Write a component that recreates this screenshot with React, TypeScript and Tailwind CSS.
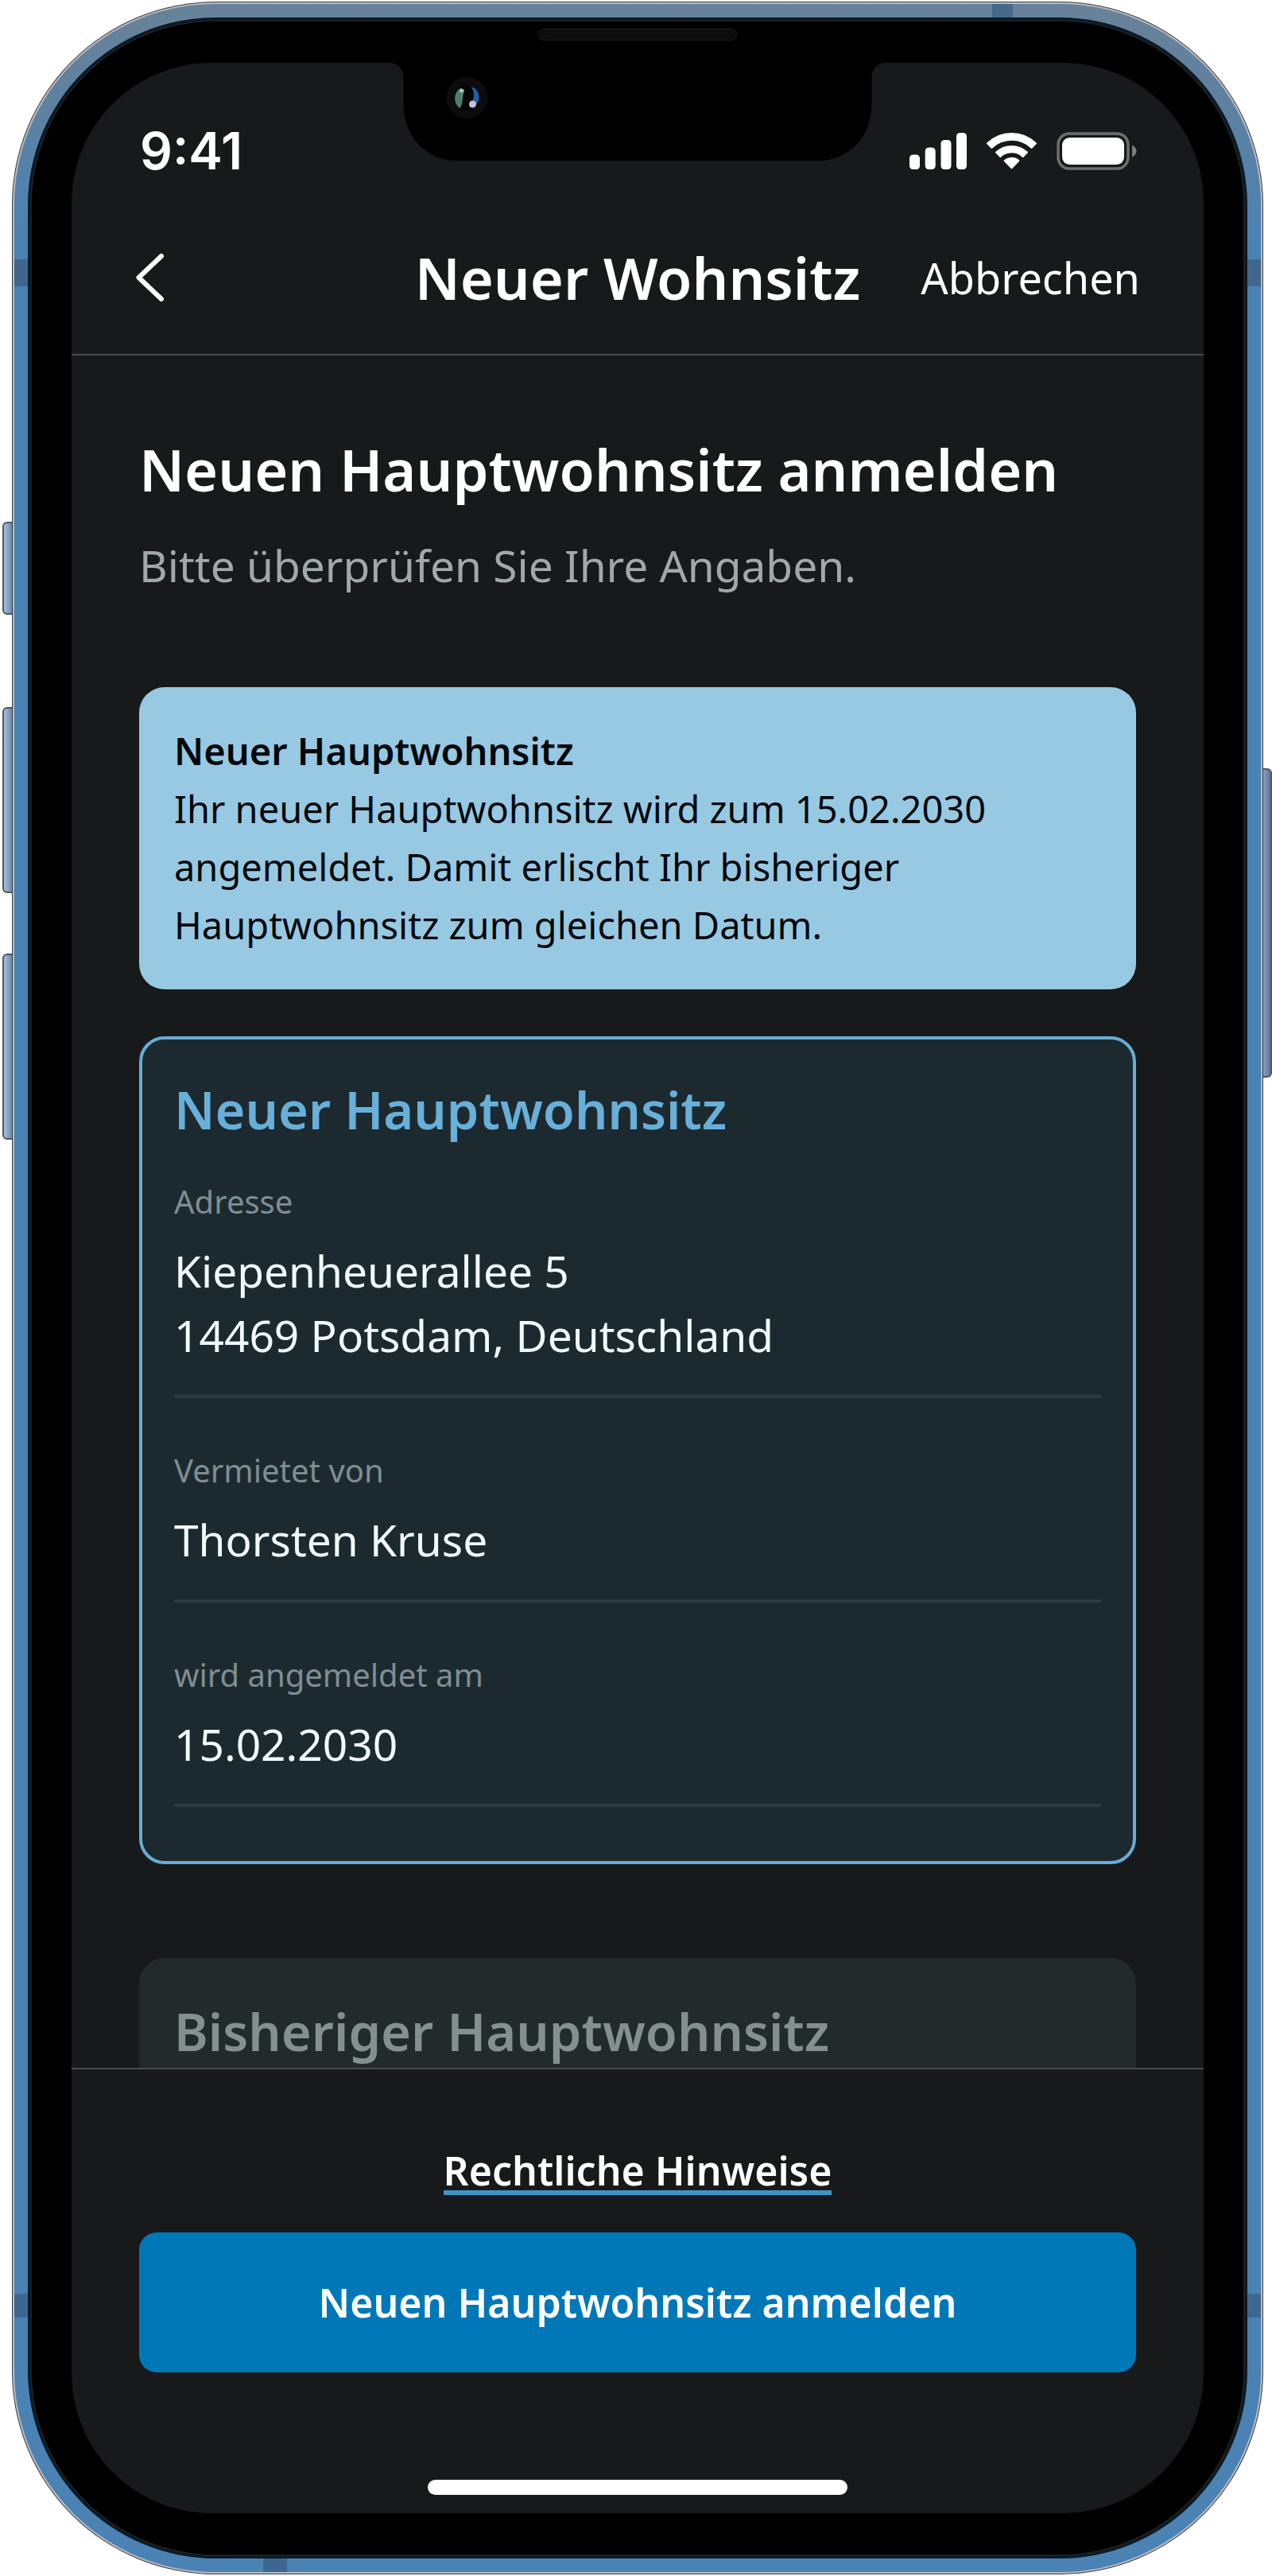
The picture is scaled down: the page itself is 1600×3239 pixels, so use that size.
type Entry = { label: string; lines: string[] };

const ENTRIES: Entry[] = [
  { label: "Adresse", lines: ["Kiepenheuerallee 5", "14469 Potsdam, Deutschland"] },
  { label: "Vermietet von", lines: ["Thorsten Kruse"] },
  { label: "wird angemeldet am", lines: ["15.02.2030"] },
];

function SignalIcon() {
  return (
    <svg viewBox="0 0 72 46" className="h-[46px] w-[72px]" fill="white" aria-hidden="true">
      <rect x="0" y="27.500" width="13" height="18.500" rx="4.500" />
      <rect x="19.700" y="18.500" width="13" height="27.500" rx="4.500" />
      <rect x="39.500" y="9" width="13" height="37" rx="4.500" />
      <rect x="59" y="0" width="13" height="46" rx="4.500" />
    </svg>
  );
}

function WifiIcon() {
  return (
    <svg
      viewBox="0 0 63 46"
      className="h-[46px] w-[63px]"
      fill="white"
      stroke="white"
      strokeWidth="2"
      strokeLinejoin="round"
      aria-hidden="true"
    >
      <path d="M1 13.300A44 44 0 0 1 62 13.300L56.600 18.700A36.500 36.500 0 0 0 6.400 18.700Z" />
      <path d="M12 24.600A29 29 0 0 1 51 24.600L45.700 30A20.500 20.500 0 0 0 17.300 30Z" />
      <path d="M22.600 35A14 14 0 0 1 40.400 35L31.500 44.300Z" />
    </svg>
  );
}

function BatteryIcon() {
  return (
    <svg viewBox="0 0 101 48" className="h-[48px] w-[101px]" fill="none" aria-hidden="true">
      <rect x="2" y="2" width="88" height="44" rx="14" stroke="#6d6e6f" strokeWidth="3.500" />
      <rect x="7" y="7" width="78" height="34" rx="9.500" fill="white" />
      <path d="M95 16.500C98.500 18 100.500 21 100.500 24S98.500 30 95 31.500Z" fill="#7c7d7e" />
    </svg>
  );
}

function Notch() {
  return (
    <svg
      viewBox="0 0 625 123"
      className="absolute top-0 left-1/2 h-[123px] w-[625px] -translate-x-1/2"
      aria-hidden="true"
    >
      <path d="M0 0C12 0 18 8 18 20V52C18 93 47 123 85 123H540C578 123 607 93 607 52V20C607 8 613 0 625 0Z" />
      <g transform="translate(98 44)">
        <circle r="26" fill="#0c0c0d" />
        <circle r="16" fill="#020303" />
        <path d="M-8-12C-17-8-18 7-9 13C-5 9-6-4-3-10Z" fill="#4f7f6c" />
        <path d="M5-14C15-12 18 2 12 8L6 5C10-1 9-8 5-14Z" fill="#1f5fa8" />
        <circle cx="-7" cy="-9" r="2.500" fill="#a9c9bd" />
        <circle cx="7" cy="8" r="4.500" fill="#c3c2dc" />
      </g>
    </svg>
  );
}

function SideButtons() {
  return (
    <div aria-hidden="true">
      <div className="absolute top-[656px] left-[3px] h-[117px] w-[14px] rounded-l-md border-2 border-[#4f5666] bg-linear-to-r from-[#b3bdd0] to-[#5f8cba]" />
      <div className="absolute top-[889px] left-[3px] h-[234px] w-[14px] rounded-l-md border-2 border-[#4f5666] bg-linear-to-r from-[#b3bdd0] to-[#5f8cba]" />
      <div className="absolute top-[1199px] left-[3px] h-[234px] w-[14px] rounded-l-md border-2 border-[#4f5666] bg-linear-to-r from-[#b3bdd0] to-[#5f8cba]" />
      <div className="absolute top-[966px] right-0 h-[389px] w-[13px] rounded-r-md border-2 border-[#4f5666] bg-linear-to-l from-[#5d7299] to-[#86a4c8]" />
    </div>
  );
}

function AntennaBands() {
  return (
    <div aria-hidden="true">
      <div className="absolute top-[321px] left-0 h-[34px] w-full bg-[#40678b]" />
      <div className="absolute bottom-[320px] left-0 h-[30px] w-full bg-[#3d6790]" />
      <div className="absolute top-0 right-[312px] h-[20px] w-[26px] bg-[#45698a]" />
      <div className="absolute bottom-0 left-[313px] h-[20px] w-[30px] bg-[#3d6790]" />
    </div>
  );
}

function StatusBar() {
  return (
    <div className="flex h-[72px] items-center justify-between pr-[84px] pl-[86px]">
      <time className="font-['Inter',sans-serif] text-[64px] leading-[72px] font-semibold">9:41</time>
      <div className="flex items-center gap-[25px]">
        <SignalIcon />
        <WifiIcon />
        <BatteryIcon />
      </div>
    </div>
  );
}

function NavBar() {
  return (
    <nav className="mt-[27px] grid h-[192px] grid-cols-[1fr_auto_1fr] items-center px-[80px]">
      <button type="button" aria-label="Zurück" className="justify-self-start">
        <svg
          viewBox="0 0 38 62"
          className="h-[62px] w-[38px]"
          fill="none"
          stroke="white"
          strokeWidth="6"
          strokeLinecap="round"
          strokeLinejoin="round"
          aria-hidden="true"
        >
          <path d="M33 4L4.500 31L33 58" />
        </svg>
      </button>
      <p className="text-[72px] leading-[96px] font-semibold">Neuer Wohnsitz</p>
      <button type="button" className="justify-self-end text-[54px] leading-[80px]">
        Abbrechen
      </button>
    </nav>
  );
}

function InfoBox() {
  return (
    <section className="mt-[113px] rounded-[32px] bg-[#98c9e2] p-[44px] text-[47px] leading-[73px] text-[#02080c]">
      <h2 className="font-semibold">Neuer Hauptwohnsitz</h2>
      <p>
        Ihr neuer Hauptwohnsitz wird zum 15.02.2030
        <br />
        angemeldet. Damit erlischt Ihr bisheriger
        <br />
        Hauptwohnsitz zum gleichen Datum.
      </p>
    </section>
  );
}

function ResidenceCard() {
  return (
    <section className="mt-[59px] rounded-[32px] border-4 border-[#67add6] bg-[#1c2a30] px-[40px] pt-[44px] pb-[68px]">
      <h2 className="text-[65px] leading-[88px] font-semibold text-[#68afd9]">Neuer Hauptwohnsitz</h2>
      <dl className="mt-[45px] flex flex-col gap-[64px]">
        {ENTRIES.map((entry) => (
          <div key={entry.label} className="border-b-4 border-[#2f3a40] pb-[35px]">
            <dt className="text-[40px] leading-[54px] text-[#7f8e92]">{entry.label}</dt>
            <dd className="mt-[19px] text-[55px] leading-[81px] text-[#f1f9fc]">
              {entry.lines.map((line) => (
                <span key={line} className="block">
                  {line}
                </span>
              ))}
            </dd>
          </div>
        ))}
      </dl>
    </section>
  );
}

function Footer() {
  return (
    <footer className="flex shrink-0 flex-col items-center border-t-2 border-[#484b4c] px-[85px] pb-[23px]">
      <a
        href="#hinweise"
        className="mt-[102px] border-b-[6px] border-[#3e96c6] text-[50px] leading-[50px] font-semibold"
      >
        Rechtliche Hinweise
      </a>
      <button
        type="button"
        className="mt-[47px] h-[176px] w-full rounded-[22px] bg-[#0078b8] text-[50px] leading-[72px] font-semibold"
      >
        Neuen Hauptwohnsitz anmelden
      </button>
      <div className="mt-[135px] h-[19px] w-[528px] rounded-full bg-white" aria-hidden="true" />
    </footer>
  );
}

function Screen() {
  return (
    <div className="relative flex h-full flex-col overflow-hidden rounded-[176px] bg-[#17191a] text-white">
      <header className="shrink-0 border-b-2 border-[#484b4c] pt-[75px]">
        <StatusBar />
        <NavBar />
      </header>
      <main className="min-h-0 flex-1 overflow-y-auto px-[85px] pt-[95px] [scrollbar-width:none]">
        <h1 className="text-[72px] leading-[96px] font-semibold">Neuen Hauptwohnsitz anmelden</h1>
        <p className="mt-[33px] text-[55px] leading-[80px] text-[#a1a9a8]">Bitte überprüfen Sie Ihre Angaben.</p>
        <InfoBox />
        <ResidenceCard />
        <section className="mt-[118px] rounded-[32px] bg-[#232a2a] px-[44px] pt-[48px] pb-[68px]">
          <h2 className="text-[65px] leading-[88px] font-semibold text-[#84908f]">Bisheriger Hauptwohnsitz</h2>
        </section>
      </main>
      <Footer />
      <Notch />
    </div>
  );
}

export default function App() {
  return (
    <div className="relative h-screen min-h-[1800px] overflow-hidden bg-white pt-[2px] pr-[11px] pb-[2px] pl-[15px] font-['Noto_Sans',sans-serif]">
      <SideButtons />
      <div className="relative h-full rounded-[256px] bg-[#3c3c40] p-px">
        <div className="h-full rounded-[255px] bg-[#b9bcc2] p-[2px]">
          <div className="relative h-full overflow-hidden rounded-[253px] bg-linear-[180deg,#68829a_0px,#5f819f_120px,#4a82b4_300px] p-[17px]">
            <AntennaBands />
            <div className="relative h-full rounded-[236px] bg-[#0b1a26] p-[3px]">
              <div className="relative h-full rounded-[233px] border-2 border-[#1d1f20] bg-black px-[50px] py-[52px]">
                <div
                  className="absolute top-[9px] left-1/2 h-[15px] w-[250px] -translate-x-1/2 rounded-full border border-[#1f1f1f] bg-[#0c0c0c]"
                  aria-hidden="true"
                />
                <Screen />
              </div>
            </div>
          </div>
        </div>
      </div>
    </div>
  );
}
